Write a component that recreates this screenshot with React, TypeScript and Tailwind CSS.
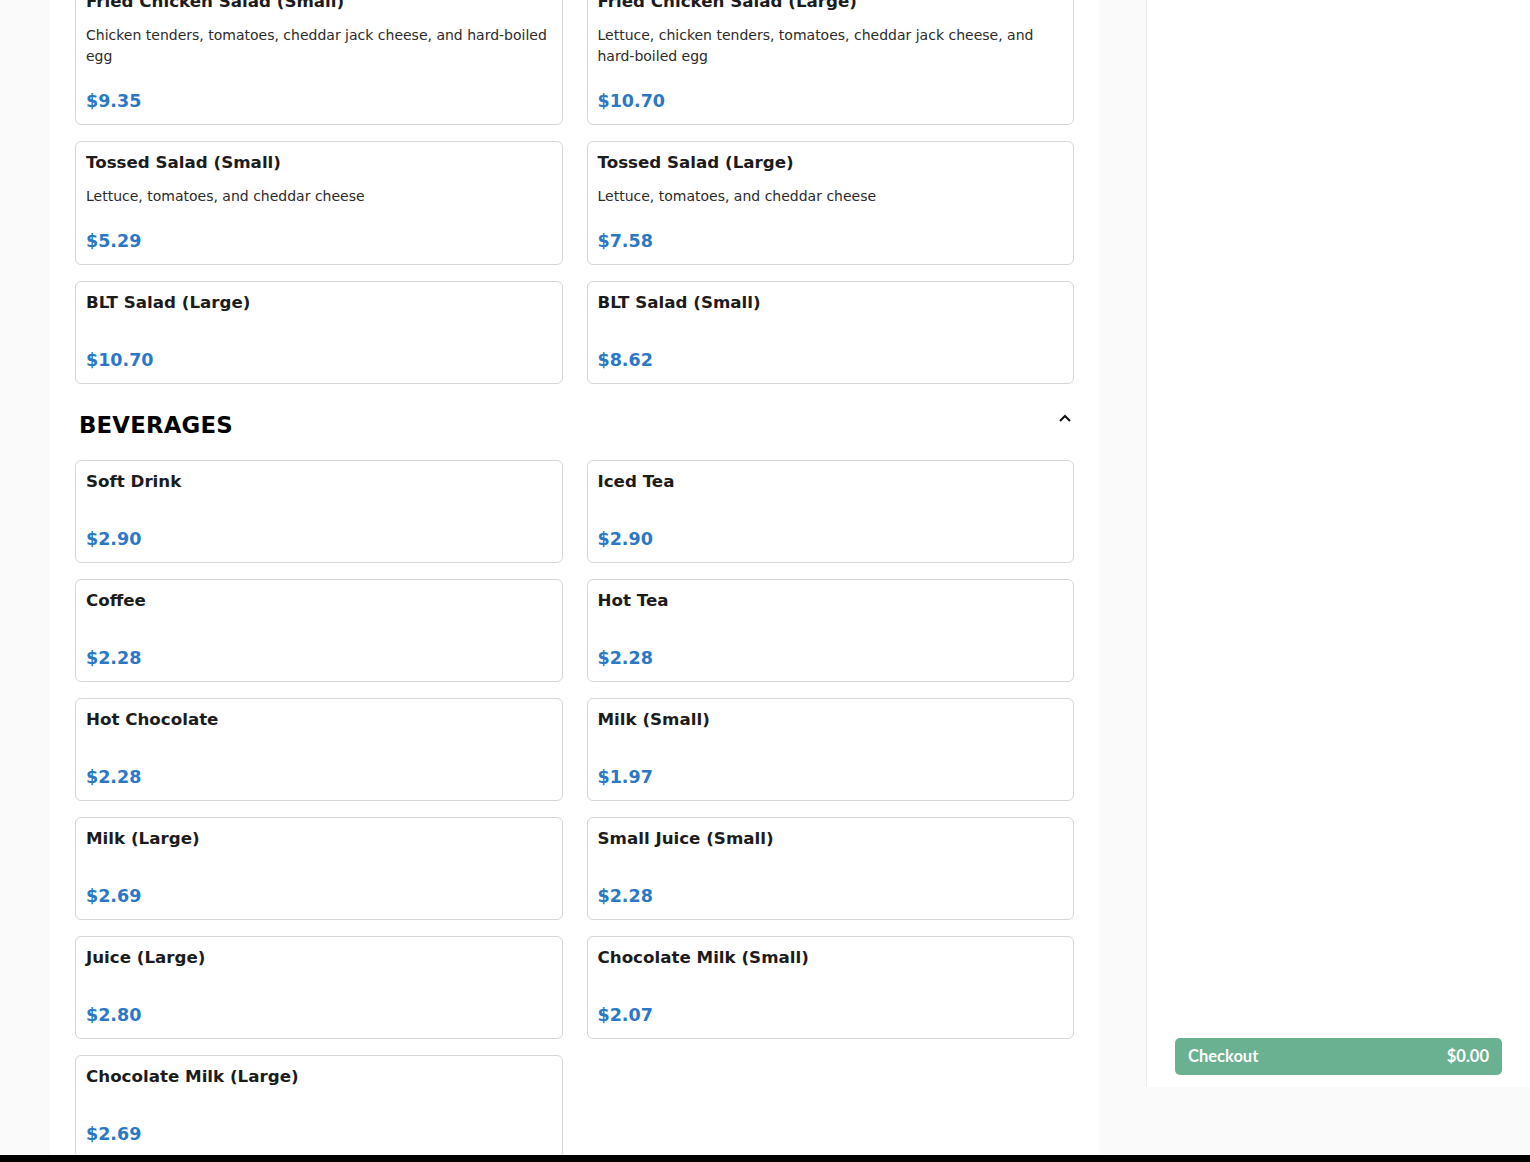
import React from "react";

type Item = { name: string; desc?: string; price: string };

const salads: Item[] = [
  { name: "Fried Chicken Salad (Small)", desc: "Chicken tenders, tomatoes, cheddar jack cheese, and hard-boiled egg", price: "$9.35" },
  { name: "Fried Chicken Salad (Large)", desc: "Lettuce, chicken tenders, tomatoes, cheddar jack cheese, and hard-boiled egg", price: "$10.70" },
  { name: "Tossed Salad (Small)", desc: "Lettuce, tomatoes, and cheddar cheese", price: "$5.29" },
  { name: "Tossed Salad (Large)", desc: "Lettuce, tomatoes, and cheddar cheese", price: "$7.58" },
  { name: "BLT Salad (Large)", price: "$10.70" },
  { name: "BLT Salad (Small)", price: "$8.62" },
];

const beverages: Item[] = [
  { name: "Soft Drink", price: "$2.90" },
  { name: "Iced Tea", price: "$2.90" },
  { name: "Coffee", price: "$2.28" },
  { name: "Hot Tea", price: "$2.28" },
  { name: "Hot Chocolate", price: "$2.28" },
  { name: "Milk (Small)", price: "$1.97" },
  { name: "Milk (Large)", price: "$2.69" },
  { name: "Small Juice (Small)", price: "$2.28" },
  { name: "Juice (Large)", price: "$2.80" },
  { name: "Chocolate Milk (Small)", price: "$2.07" },
  { name: "Chocolate Milk (Large)", price: "$2.69" },
];

function Card({ item }: { item: Item }) {
  return (
    <div className="flex flex-col rounded-[6px] border border-[#d6d6d6] bg-white px-[10px] pt-[8px] pb-[9px]">
      <div className="text-[16.7px] font-bold leading-[24px] text-[#1c1c1c]">{item.name}</div>
      <div className="mt-[12px] text-[14px] leading-[21px] text-[#2b2b2b]">{item.desc ?? ""}</div>
      <div className="mt-[21px] text-[17.5px] font-bold leading-[27px] text-[#2a78c6]">{item.price}</div>
    </div>
  );
}

export default function App() {
  return (
    <div
      className="flex h-[1162px] w-full flex-col overflow-hidden bg-[#fafafa]"
      style={{ fontFamily: '"DejaVu Sans", "Liberation Sans", sans-serif' }}
    >
      <div className="flex h-[1155px] overflow-hidden">
        <div className="w-[50px] shrink-0" />
        <main className="w-[1049px] shrink-0 bg-white px-[25px]">
          <div className="-mt-[20px] grid grid-cols-2 gap-x-[24px] gap-y-[16px]">
            {salads.map((it) => (
              <Card key={it.name} item={it} />
            ))}
          </div>
          <div className="mt-[23px] mb-[17px] flex h-[36px] items-center justify-between pl-[4px] pr-[2px]">
            <h2 className="text-[22.8px] font-bold leading-[36px] tracking-[0.2px] text-black">BEVERAGES</h2>
            <svg width="14" height="9" viewBox="0 0 14 9" className="-mt-[14px]">
              <path d="M2 7 L7 2 L12 7" fill="none" stroke="#111" strokeWidth="2" />
            </svg>
          </div>
          <div className="grid grid-cols-2 gap-x-[24px] gap-y-[16px]">
            {beverages.map((it) => (
              <Card key={it.name} item={it} />
            ))}
          </div>
        </main>
        <div className="w-[47px] shrink-0" />
        <aside className="flex h-[1087px] flex-1 flex-col justify-end border-l border-[#ececec] bg-white pl-[28px] pr-[28px] pb-[12px]">
          <button
            className="flex h-[37px] w-full items-center justify-between rounded-[5px] bg-[#69b190] px-[13px] text-[16.5px] font-bold text-white"
            style={{ fontFamily: '"Lato", "Open Sans", sans-serif' }}
          >
            <span>Checkout</span>
            <span>$0.00</span>
          </button>
        </aside>
      </div>
      <div className="h-[7px] bg-black" />
    </div>
  );
}
